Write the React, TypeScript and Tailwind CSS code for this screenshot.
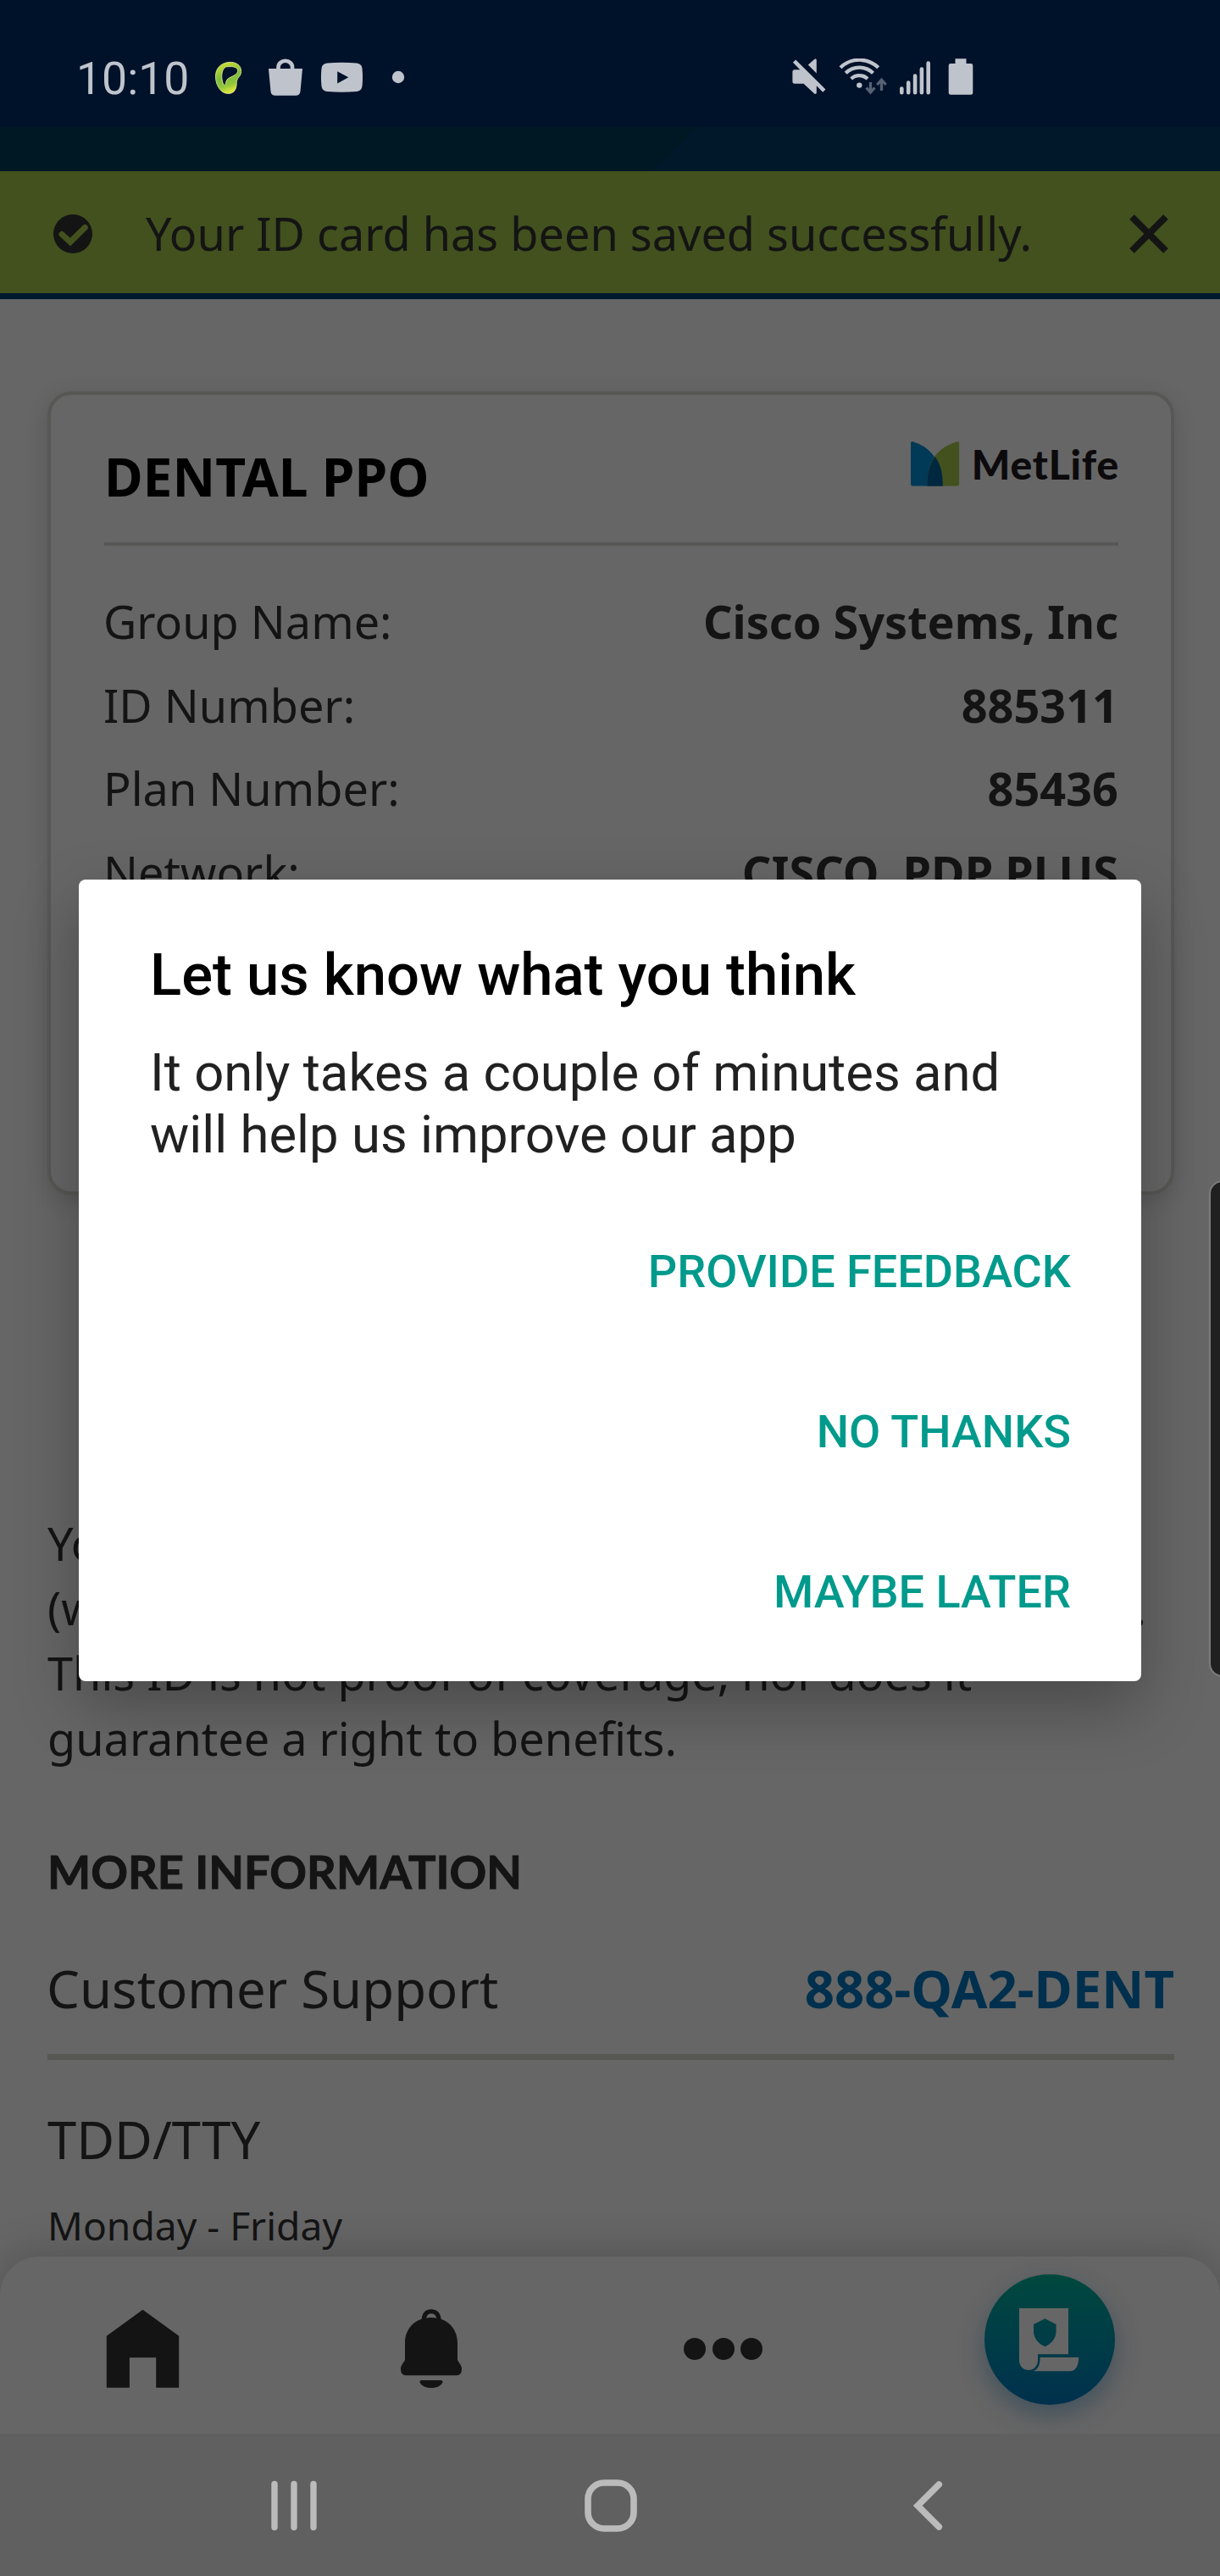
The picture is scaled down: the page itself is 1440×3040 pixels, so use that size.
import React from "react";

const planRows = [
  { label: "Group Name:", value: "Cisco Systems, Inc" },
  { label: "ID Number:", value: "885311" },
  { label: "Plan Number:", value: "85436" },
  { label: "Network:", value: "CISCO  PDP PLUS" },
];

const dialogActions = ["PROVIDE FEEDBACK", "NO THANKS", "MAYBE LATER"];

function StatusBar() {
  return (
    <div className="flex h-[150px] items-center justify-between bg-[#00112a] pt-[35px] pr-[291px] pl-[90px] font-[Roboto,sans-serif] text-[#bfc4cc]">
      <div className="flex items-center">
        <span className="w-[164px] pt-px text-[53.6px] leading-none">10:10</span>
        <svg className="h-[47px] w-[31px]" viewBox="254 69 31 47">
          <defs>
            <linearGradient id="loop" x1="0" y1="0" x2="0.3" y2="1">
              <stop offset="0" stopColor="#d9e532" />
              <stop offset="0.55" stopColor="#7fbb3a" />
              <stop offset="0.8" stopColor="#8fc63c" />
              <stop offset="1" stopColor="#d6e23a" />
            </linearGradient>
          </defs>
          <path
            fill="url(#loop)"
            fillRule="evenodd"
            stroke="#eef7a0"
            strokeWidth="0.8"
            d="M271 73.400C279 73 285 77.500 284.600 84.500C284.300 90 280.500 91.500 279.600 95C278.800 98.500 280 103 276.500 107.500C273.500 111.300 266 111.400 261.500 107.500C256 102.500 253.600 94 254.800 86.500C256 79 262.500 73.800 271 73.400ZM266.500 79C262 81.500 261 89 262.300 95C262.800 98.200 264 100.500 265.400 100.500C266.800 99.500 266.300 96.500 268 94C271 90.500 279 89.500 280.600 84.500C281.300 80 276.500 78.600 272 78.600C270 78.600 268 78.600 266.500 79Z"
          />
        </svg>
        <svg className="ml-[31px] h-[47px] w-[42px]" viewBox="316 69 42 47" fill="currentColor">
          <path d="M317 81H357L354.500 108Q354 112.800 349 112.800H325Q320 112.800 319.500 108Z" />
          <path d="M328.500 82V79.500a8.300 7.800 0 0 1 16.600 0V82" fill="none" stroke="currentColor" strokeWidth="4.600" />
        </svg>
        <svg className="ml-5 h-[47px] w-[50px]" viewBox="378 69 50 47" fill="currentColor">
          <path
            fillRule="evenodd"
            d="M386 74.600Q403.500 73 421 74.600Q427 75.200 427.500 81Q428.600 91.300 427.500 101.500Q427 107.400 421 108Q403.500 109.600 386 108Q380 107.400 379.500 101.500Q378.400 91.300 379.500 81Q380 75.200 386 74.600ZM398.200 84.200V98.400L411.300 91.300Z"
          />
        </svg>
        <svg className="ml-[34px] h-[47px] w-[16px]" viewBox="462 69 16 47">
          <circle cx="470" cy="91" r="7.200" fill="currentColor" />
        </svg>
      </div>
      <div className="flex items-center">
        <svg className="h-[47px] w-[40px]" viewBox="935 69 40 47" fill="currentColor">
          <path d="M963.800 70V86.500L953.800 76.500L961.500 69.700Q963.800 69 963.800 71Z" />
          <path d="M938 82.300H944.300L935.900 73.800L939.200 70.500L974.500 105.600L971.200 108.800L963.800 101.200V109.500Q963.300 111.700 961.200 110.600L948.500 98.700H938Q935.400 98.700 935.400 96V85Q935.400 82.300 938 82.300Z" />
        </svg>
        <svg className="ml-[15px] h-[47px] w-[58px]" viewBox="990 69 58 47" fill="none" stroke="currentColor" strokeWidth="4.300">
          <path d="M992 79.800A32 32 0 0 1 1036.700 79.800" />
          <path d="M998.200 86.300A23 23 0 0 1 1030.500 86.300" />
          <path d="M1004.700 93A14 14 0 0 1 1024 93" />
          <circle cx="1014.300" cy="100.600" r="3.200" fill="currentColor" stroke="none" />
          <g stroke="#566173" strokeWidth="3.300">
            <path d="M1027.500 97V109M1022.500 103.500L1027.500 109L1032.500 103.500" />
            <path d="M1040.500 107V94.500M1035.300 100L1040.500 94.300L1045.700 100" />
          </g>
        </svg>
        <svg className="ml-[13px] h-[47px] w-[38px]" viewBox="1061 69 38 47" fill="none" stroke="currentColor" strokeWidth="4.600" strokeLinecap="round">
          <path d="M1064.300 104.500V109.300M1072.200 97.500V109.300M1080.100 89.500V109.300M1087.900 81.500V109.300M1095.700 74.500V109.300" />
        </svg>
        <svg className="ml-5 h-[47px] w-[30px]" viewBox="1119 69 30 47" fill="currentColor">
          <path d="M1127.500 69.200H1140.500V75H1146Q1148.300 75 1148.300 77.300V109Q1148.300 111.700 1146 111.700H1122Q1119.700 111.700 1119.700 109V77.300Q1119.700 75 1122 75H1127.500Z" />
        </svg>
      </div>
    </div>
  );
}

function SuccessBanner() {
  return (
    <div className="flex h-[151px] items-center border-b-[7px] border-[#00192c] bg-[#42511e] pl-[63px]">
      <svg className="mt-[3px] size-[46px]" viewBox="0 0 46 46">
        <circle cx="23" cy="23" r="23" fill="#141414" />
        <path d="M10 23.500L20 32.600L37.300 15.500" fill="none" stroke="#42511e" strokeWidth="7" strokeLinecap="round" />
      </svg>
      <span className="mt-[2px] ml-[63px] w-[1161px] text-[54px] leading-[74px]">Your ID card has been saved successfully.</span>
      <svg className="mt-[3px] size-[46px]" viewBox="0 0 46 46">
        <path d="M3 3L43 43M43 3L3 43" fill="none" stroke="#141414" strokeWidth="8" />
      </svg>
    </div>
  );
}

function BrandLogo() {
  return (
    <div className="mb-[30px] flex items-center">
      <svg className="h-[53px] w-[58px]" viewBox="1075 521 58 53">
        <path d="M1077.500 521.200C1096 526.500 1112.800 543 1112.800 573.600H1077Q1075 573.600 1075 571.500V523Q1075 520.500 1077.500 521.200Z" fill="#003a57" />
        <path d="M1129.600 521.200Q1132.100 520.500 1132.100 523V571.500Q1132.100 573.600 1130 573.600H1094.400C1094 552 1100 530 1129.600 521.200Z" fill="#42511e" />
        <path d="M1103.600 539C1109.500 547 1112.800 557 1112.800 573.600H1094.400C1094.200 560 1096.500 549 1103.600 539Z" fill="#002740" />
      </svg>
      <span className="-mr-px ml-[14px] font-[Lato,sans-serif] text-[48px] leading-[53px] font-black tracking-[0.8px] text-[#0c0a0c]">MetLife</span>
    </div>
  );
}

function IdCard() {
  return (
    <section className="h-[948px] rounded-[28px] border-4 border-[#575755] bg-[#666] px-[62px] pt-[18px] shadow-[0_6px_26px_rgba(0,0,0,0.15)]">
      <header className="ml-px flex h-[160px] items-center justify-between border-b-4 border-[#575756]">
        <h1 className="text-[62.300px] leading-[84px] font-bold text-black">DENTAL PPO</h1>
        <BrandLogo />
      </header>
      <dl className="pt-[40px]">
        {planRows.map((row) => (
          <div key={row.label} className="flex h-[98.500px] items-center justify-between text-[54px] leading-[74px]">
            <dt>{row.label}</dt>
            <dd className="font-bold whitespace-pre">{row.value}</dd>
          </div>
        ))}
      </dl>
    </section>
  );
}

function TabBar() {
  return (
    <nav className="relative -mt-[50px] flex h-[209px] items-start rounded-t-[46px] bg-[#666] pl-[125px] shadow-[0_-8px_46px_rgba(0,0,0,0.17)]">
      <svg className="mt-[62px] h-[94px] w-[87px]" viewBox="125 2725 87 94">
        <path d="M168.500 2725.700L211.200 2756.700V2817.700H184.200V2782.300H152.900V2817.700H125.800V2756.700Z" fill="#141414" />
      </svg>
      <svg className="mt-[62px] ml-[260px] h-[94px] w-[74px]" viewBox="472 2725 74 94">
        <path d="M500 2740Q500 2727.800 509 2727.800T518.500 2740" fill="none" stroke="#141414" strokeWidth="5" />
        <path d="M509 2735C529 2735 540 2749 540 2765V2785C542 2789 545 2791 545 2796Q545 2803.200 539 2803.200H479Q473 2803.200 473 2796C473 2791 476 2789 478 2785V2765C478 2749 489 2735 509 2735Z" fill="#141414" />
        <path d="M497.500 2809H520.500Q523 2809 522.400 2811.500C520.500 2815.500 516 2818 509 2818S497.500 2815.500 495.600 2811.500Q495 2809 497.500 2809Z" fill="#141414" />
      </svg>
      <div className="mt-[96px] ml-[261px] flex gap-[7.500px]">
        <span className="size-[26px] rounded-full bg-[#141414]" />
        <span className="size-[26px] rounded-full bg-[#141414]" />
        <span className="size-[26px] rounded-full bg-[#141414]" />
      </div>
      <div className="mt-[21px] ml-[262px] size-[154px] rounded-full bg-linear-to-b from-[#00483e] to-[#00304d] shadow-[0_12px_30px_rgba(0,48,77,0.38)]">
        <svg className="size-[154px]" viewBox="1162 2684 154 154" fill="#666">
          <path
            fillRule="evenodd"
            d="M1203 2724H1261V2778.300H1225V2785C1225 2792 1220.500 2797 1214 2797S1203 2792 1203 2785ZM1233.400 2736.300L1220 2743V2751C1220 2759 1225 2765.500 1233.400 2769.200C1241.800 2765.500 1246.600 2759 1246.600 2751V2743Z"
          />
          <path d="M1227.600 2782H1273.200C1273.200 2792 1269.500 2798.300 1263 2798.300H1219.500C1225.500 2796 1227.600 2791 1227.600 2782Z" />
        </svg>
      </div>
    </nav>
  );
}

function SystemNav() {
  return (
    <div className="relative flex h-[168px] items-center bg-[#606060] pt-[2px] pl-[319px]">
      <svg className="h-[64px] w-[56px]" viewBox="319 2925 56 64" fill="none" stroke="#bbb" strokeWidth="7.400" strokeLinecap="round">
        <path d="M324 2931.500V2982.500M347 2931.500V2982.500M370 2931.500V2982.500" />
      </svg>
      <svg className="ml-[314px] h-[64px] w-[64px]" viewBox="689 2925 64 64" fill="none" stroke="#bbb" strokeWidth="7.600">
        <rect x="694" y="2930" width="54" height="54" rx="19" />
      </svg>
      <svg className="ml-[323px] h-[64px] w-[40px]" viewBox="1076 2925 40 64" fill="none" stroke="#bbb" strokeWidth="7.600" strokeLinecap="round">
        <path d="M1108.300 2932L1083.200 2957L1108.300 2982" />
      </svg>
    </div>
  );
}

function FeedbackDialog() {
  return (
    <div
      role="dialog"
      className="absolute top-[1038px] left-[93px] flex h-[946px] w-[1254px] flex-col rounded-[8px] bg-white pt-[73px] pr-[83px] pl-[84px] font-[Roboto,sans-serif] shadow-[0_30px_76px_rgba(0,0,0,0.28)]"
    >
      <h2 className="text-[68.800px] leading-[80px] font-medium text-black">Let us know what you think</h2>
      <p className="mt-[39px] text-[61.600px] leading-[73px] text-[#212121]">
        It only takes a couple of minutes and
        <br />
        will help us improve our app
      </p>
      <div className="mt-[30px] flex flex-col items-end">
        {dialogActions.map((action) => (
          <button key={action} className="h-[189px] text-[54px] leading-none font-medium text-[#009a8c]">
            {action}
          </button>
        ))}
      </div>
    </div>
  );
}

export default function App() {
  return (
    <div className="relative h-[3040px] w-[1440px] overflow-hidden bg-[#666] font-['Noto_Sans',sans-serif] text-[#141414]">
      <StatusBar />
      <div className="h-[52px] bg-[linear-gradient(135deg,#001824_581px,#001829_582px)]" />
      <SuccessBanner />
      <main className="h-[2360px] overflow-hidden px-[56px] pt-[109px]">
        <div className="w-[1330px]">
          <IdCard />
          <p className="mt-[372.500px] text-[54px] leading-[76.800px]">
            Your
            <span className="flex w-[1297px] justify-between">
              <span>(with</span>
              <span>.</span>
            </span>
            This ID is not proof of coverage, nor does it
            <br />
            guarantee a right to benefits.
          </p>
          <h2 className="mt-[83px] font-[Lato,sans-serif] text-[54.200px] leading-[72px] font-bold [-webkit-text-stroke:1px_#141414]">MORE INFORMATION</h2>
          <div className="mt-[59px] flex h-[127px] justify-between border-b-[7px] border-[#575754] text-[61.700px] leading-[84px]">
            <span className="-ml-px">Customer Support</span>
            <span className="font-bold text-[#00304d]">888-QA2-DENT</span>
          </div>
          <div className="mt-[51px] text-[61.500px] leading-[84px]">TDD/TTY</div>
          <div className="mt-[30px] text-[46.200px] leading-[62px]">Monday - Friday</div>
        </div>
      </main>
      <TabBar />
      <SystemNav />
      <FeedbackDialog />
      <div className="absolute top-[1393px] right-[-8px] h-[586px] w-[21px] rounded-l-[16px] border-2 border-[#7c7c7c] bg-[#202020]" />
    </div>
  );
}
